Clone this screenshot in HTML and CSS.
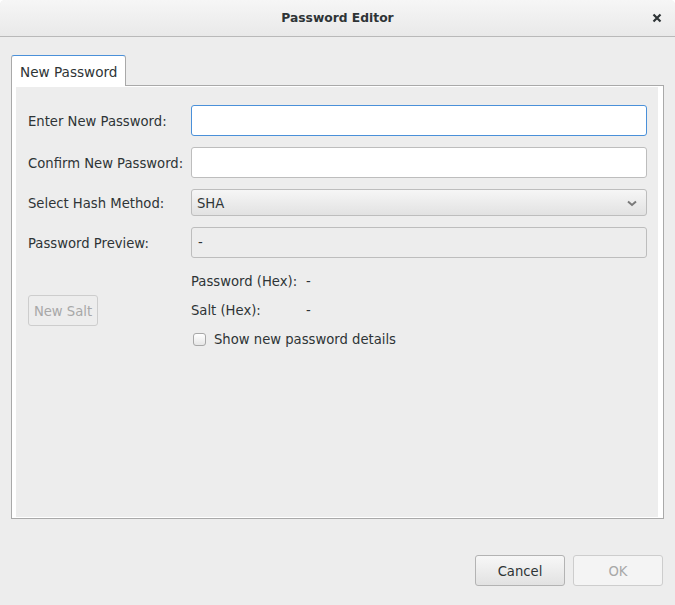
FILE: index.html
```html
<!DOCTYPE html>
<html>
<head>
<meta charset="utf-8">
<link rel="stylesheet" href="styles.css">
</head>
<body>
<div class="window">
  <div class="titlebar">
    <span class="title">Password Editor</span>
    <span class="close">
      <svg width="10" height="10" viewBox="0 0 10 10"><path d="M1.5 1.5 L8.5 8.5 M8.5 1.5 L1.5 8.5" stroke="#2e3436" stroke-width="2.2" fill="none"/></svg>
    </span>
  </div>
  <div class="body">
    <div class="tabs">
      <div class="tab">New Password</div>
    </div>
    <div class="pane">
      <div class="inner">
        <div class="form">
          <label class="lbl">Enter New Password:</label>
          <div class="field focus"></div>
          <label class="lbl">Confirm New Password:</label>
          <div class="field"></div>
          <label class="lbl">Select Hash Method:</label>
          <div class="select"><span>SHA</span>
            <svg width="10" height="7" viewBox="0 0 10 7"><path d="M1 1.5 L5 5 L9 1.5" stroke="#7a7a7a" stroke-width="2" fill="none"/></svg>
          </div>
          <label class="lbl">Password Preview:</label>
          <div class="field preview">-</div>
        </div>
        <div class="details">
          <div class="salt-col"><div class="btn disabled salt">New Salt</div></div>
          <div class="hex">
            <div class="hexrow"><span class="hk">Password (Hex):</span><span>-</span></div>
            <div class="hexrow"><span class="hk">Salt (Hex):</span><span>-</span></div>
            <div class="hexrow check"><span class="box"></span><span>Show new password details</span></div>
          </div>
        </div>
      </div>
    </div>
    <div class="footer">
      <div class="btn">Cancel</div>
      <div class="btn disabled ok">OK</div>
    </div>
  </div>
</div>
</body>
</html>
```

FILE: styles.css
```css
* { box-sizing: border-box; }
html, body { margin: 0; padding: 0; background: #ffffff; }
body {
  font-family: "DejaVu Sans", sans-serif;
  font-size: 13.2px;
  color: #2e3436;
}
.window {
  width: 675px;
  height: 605px;
  background: #ededed;
  border-radius: 5px 5px 0 0;
  overflow: hidden;
}
.titlebar {
  height: 37px;
  border-bottom: 1px solid #b9b9b9;
  background: linear-gradient(#f6f6f6, #e9e9e9);
  display: flex;
  align-items: center;
  justify-content: center;
  position: relative;
}
.title { font-weight: bold; font-size: 12.3px; color: #2e3436; }
.close {
  position: absolute;
  right: 13px;
  top: 13px;
  width: 10px;
  height: 10px;
  display: flex;
}
.body {
  padding: 18px 11px 0 11px;
}
.tabs { display: flex; height: 30px; }
.tab {
  position: relative;
  z-index: 1;
  width: 115px;
  height: 31px;
  background: #ffffff;
  border: 1px solid #a9a9a9;
  border-top: 1px solid #4a90d9;
  border-bottom: none;
  border-radius: 3px 3px 0 0;
  padding: 7px 0 0 8px;
  line-height: 18px;
  font-size: 13.6px;
}
.pane {
  border: 1px solid #a9a9a9;
  background: #ffffff;
  padding: 1px 5px 1px 4px;
}
.inner {
  height: 430px;
  background: #ededed;
  padding: 18px 11px 0 12px;
}
.form {
  display: grid;
  grid-template-columns: 163px 1fr;
  grid-template-rows: 31px 31px 27px 31px;
  row-gap: 11px;
  align-items: center;
}
.lbl { line-height: 16px; padding-top: 2px; }
.field {
  height: 31px;
  background: #ffffff;
  border: 1px solid #bdbdbd;
  border-radius: 3px;
}
.field.focus { border-color: #4a90d9; }
.field.preview {
  background: #ededed;
  padding-left: 6px;
  line-height: 29px;
}
.select {
  height: 27px;
  border: 1px solid #bdbdbd;
  border-radius: 3px;
  background: linear-gradient(#f6f6f6, #e2e2e2);
  display: flex;
  align-items: center;
  justify-content: space-between;
  padding: 1px 9px 0 5px;
}
.details {
  display: grid;
  grid-template-columns: 163px 1fr;
  margin-top: 9px;
}
.salt-col { display: flex; align-items: center; }
.btn {
  height: 31px;
  border: 1px solid #b3b3b3;
  border-radius: 3px;
  background: linear-gradient(#f7f7f7, #e2e2e2);
  display: flex;
  align-items: center;
  justify-content: center;
  padding-top: 1px;
}
.btn.disabled {
  background: #f4f4f4;
  border-color: #cdcdcd;
  color: #a8a8a8;
}
.btn.salt {
  width: 70px;
  background: #ededed;
}
.hexrow {
  height: 29px;
  display: flex;
  align-items: center;
}
.hk { width: 115px; }
.check { padding-left: 2px; }
.box {
  width: 13px;
  height: 13px;
  border: 1px solid #a8a8a8;
  border-radius: 3px;
  background: linear-gradient(#ffffff, #e6e6e6);
  margin-right: 8px;
}
.footer {
  display: flex;
  justify-content: flex-end;
  gap: 8px;
  margin-top: 36px;
  padding-right: 1px;
}
.footer .btn { width: 90px; }
```
